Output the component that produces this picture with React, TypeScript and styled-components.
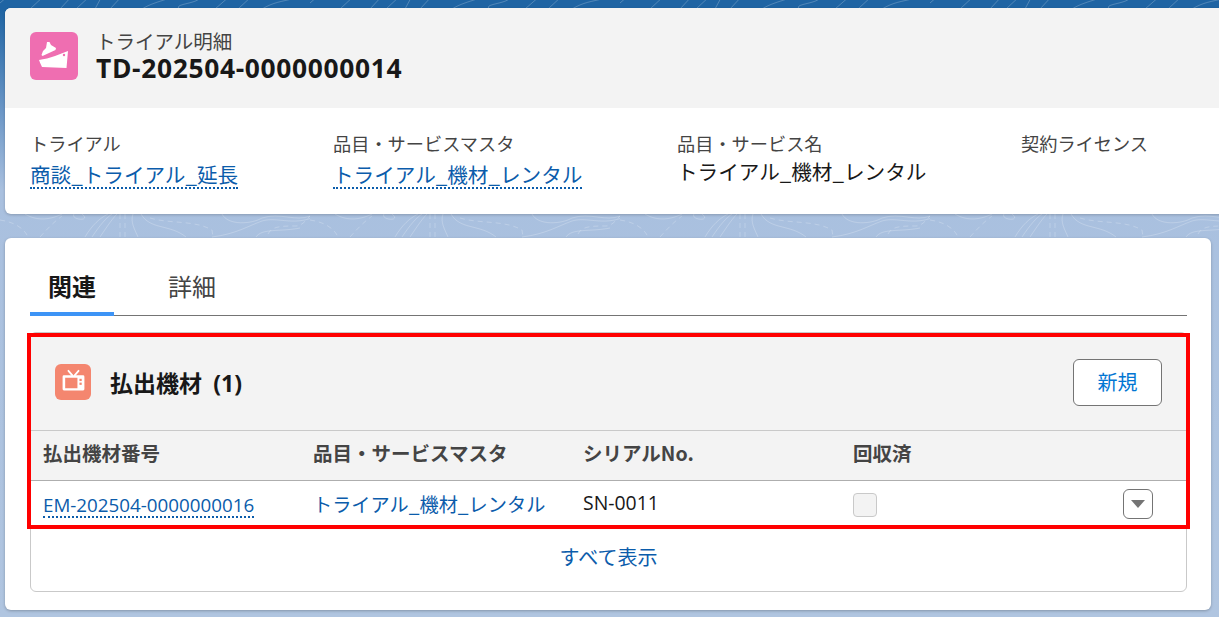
import React from "react";
import styled, { createGlobalStyle } from "styled-components";

const Global = createGlobalStyle`
  html, body { margin: 0; padding: 0; height: 100%; overflow: hidden; }
  body { font-family: "Noto Sans", "Noto Sans CJK JP", sans-serif; color: #181818; }
`;
const FONT_JP = `"Noto Sans CJK JP", "Noto Sans", sans-serif`;

const Page = styled.div`
  position: relative; width: 1219px; height: 617px; overflow: hidden; box-sizing: border-box;
  padding: 8px 0 0 5px;
  background: linear-gradient(180deg, #1f64a3 0px, #1f64a3 10px, #5b8cc0 90px, #a9c0df 190px, #b0c5e0 617px);
`;
const Contours = styled.svg`position: absolute; inset: 0; width: 100%; height: 100%;`;
const HeaderCard = styled.section`
  position: relative; width: 1240px; height: 205.5px; border-radius: 6px; overflow: hidden; background: #fff;
  box-shadow: 0 1px 3px rgba(0,0,0,.2);
`;
const Highlights = styled.div`
  height: 100px; background: #f3f3f3; display: flex; align-items: flex-start; padding: 24px 0 0 25px; gap: 18px; box-sizing: border-box;
`;
const IconTile = styled.div<{ $bg: string; $size: number }>`
  width: ${p => p.$size}px; height: ${p => p.$size}px; background: ${p => p.$bg}; border-radius: 6px; flex: none;
  display: flex; align-items: center; justify-content: center;
`;
const TitleStack = styled.div`display: flex; flex-direction: column; margin-top: -3px;`;
const Kicker = styled.div`font: 400 19.5px/24px ${FONT_JP}; color: #444;`;
const Title = styled.div`font: 700 26.4px/32px "Open Sans", sans-serif; letter-spacing: .65px; color: #181818; margin-top: -1px;`;
const Fields = styled.div`display: grid; grid-template-columns: 303px 344px 344px 1fr; padding: 22px 0 0 25px;`;
const Field = styled.div`display: flex; flex-direction: column; align-items: flex-start;`;
const FieldLabel = styled.div`font: 400 18.2px/26px ${FONT_JP}; color: #444;`;
const FieldValue = styled.div`font: 400 20.6px/30px ${FONT_JP}; color: #181818;`;
const FieldLink = styled(FieldValue)`color: #0b5cab; border-bottom: 2px dotted #0b5cab; line-height: 26px; margin-top: 5px;`;

const MainCard = styled.section`
  position: relative; width: 1206px; height: 372px; margin-top: 24.5px; background: #fff; border-radius: 6px; box-sizing: border-box;
  padding: 24px 24px 0 25px; box-shadow: 0 1px 3px rgba(0,0,0,.25);
`;
const Tabs = styled.div`display: flex; border-bottom: 1px solid #747474; height: 54px; box-sizing: border-box;`;
const Tab = styled.div<{ $active?: boolean }>`
  width: ${p => p.$active ? "84px" : "auto"}; padding: ${p => p.$active ? "0" : "0 30px 0 54px"}; height: 54px; box-sizing: border-box; text-align: center;
  font: ${p => p.$active ? 700 : 400} 24px/48px ${FONT_JP}; color: ${p => p.$active ? "#181818" : "#444"};
  border-bottom: ${p => p.$active ? "4px solid #3d94f6" : "none"};
`;
const ListBox = styled.div`
  position: relative; margin-top: 16px; height: 260px; box-sizing: border-box; border: 1px solid #c9c9c9; border-radius: 6px; display: flex; flex-direction: column;
`;
const ListHead = styled.div`
  height: 97px; flex: none; box-sizing: border-box; background: #f3f3f3; display: flex; align-items: center; padding: 0 24px 0 24px; border-radius: 6px 6px 0 0;
`;
const ListTitle = styled.h2`font: 700 23px/28px ${FONT_JP}; margin: 1px 0 0 19px; flex: 1; color: #181818;
  & span { font-family: "Open Sans", sans-serif; margin-left: 6px; }`;
const NewButton = styled.button`
  width: 89px; height: 47px; background: #fff; border: 1px solid #747474; border-radius: 6px; color: #0176d3; font: 400 20px/1 ${FONT_JP}; padding: 0; margin-top: 1px;
`;
const Row = styled.div`display: grid; grid-template-columns: 270px 270px 270px 1fr; padding-left: 12px; align-items: center; box-sizing: border-box; position: relative;`;
const HeadRow = styled(Row)`height: 51px; background: #f3f3f3; border-top: 1px solid #c9c9c9; border-bottom: 1px solid #aeaeae;`;
const BodyRow = styled(Row)`height: 48px; background: #fff;`;
const HeadCell = styled.div`font: 700 19.5px/24px ${FONT_JP}; color: #444; margin-top: -6px;`;
const CellLink = styled.a`font: 400 19.2px/26px ${FONT_JP}; color: #0b5cab; justify-self: start; margin-top: -2px;`;
const IdLink = styled.a`font: 400 18.8px/22px "Open Sans", sans-serif; color: #0b5cab; justify-self: start; border-bottom: 2px dotted #0b5cab; margin-top: 1px;`;
const CellText = styled.div`font: 400 19.4px/24px "Open Sans", sans-serif; color: #181818; margin-top: -4px;`;
const CheckBox = styled.div`width: 24px; height: 24px; box-sizing: border-box; background: #f3f3f3; border: 1px solid #c9c9c9; border-radius: 4px; margin-top: 0;`;
const RowMenu = styled.button`
  position: absolute; right: 33px; top: 8px; width: 30px; height: 30px; box-sizing: border-box; background: #fff; border: 1px solid #747474; border-radius: 6px; padding: 0;
  display: flex; align-items: center; justify-content: center;
`;
const Footer = styled.div`flex: 1; display: flex; align-items: center; justify-content: center; font: 400 20px/26px ${FONT_JP}; color: #0b5cab; margin-top: -6px;`;
const RedFrame = styled.div`
  position: absolute; left: 22px; top: 95px; width: 1163px; height: 196px; box-sizing: border-box; border: 4px solid #ff0000; pointer-events: none;
`;

const solid = [
  "M25 214C38 222 52 219 62 214",
  "M85 237C92 225 100 218 108 214",
  "M92 237C100 225 106 218 112 214",
  "M100 237C108 225 113 218 117 214",
  "M133 214C130 222 135 230 138 237",
  "M141 214C150 230 170 224 186 237",
  "M222 214C228 226 252 224 262 218C280 212 296 222 310 216",
  "M212 237C236 234 248 226 262 221C278 216 296 228 320 214",
  "M256 237C262 228 280 232 300 228",
  "M82 214C92 222 70 220 74 214",
  "M0 3L8 -4M30 9L44 -4M60 9L72 -4M76 9L90 -4M95 9L102 -4M110 9L122 -4",
  "M142 9C150 4 158 2 170 -2M180 9C172 4 196 4 200 -2M215 9L230 -4M238 9L252 -4M262 9C274 2 280 2 296 -2",
];
const dashed = [
  "M120 214V237M125 214V237",
  "M150 218C170 224 195 220 212 230L213 237",
  "M0 220C14 222 24 228 28 237",
  "M40 237C48 228 54 222 62 216",
  "M268 234C272 226 282 226 296 226C302 226 306 220 310 216",
];

const App: React.FC = () => (
  <Page>
    <Global />
    <Contours fill="none" stroke="#fff" strokeOpacity=".22" strokeWidth="1">
      <defs>
        <pattern id="contour" width="310" height="617" patternUnits="userSpaceOnUse">
          {solid.map(d => <path key={d} d={d} fill="none" stroke="#fff" strokeOpacity=".22" />)}
          {dashed.map(d => <path key={d} d={d} fill="none" stroke="#fff" strokeOpacity=".22" strokeDasharray="5 4" />)}
        </pattern>
      </defs>
      <rect width="1219" height="617" fill="url(#contour)" stroke="none" />
    </Contours>
    <HeaderCard>
      <Highlights>
        <IconTile $bg="#ef6eb1" $size={48}>
          <svg width="48" height="48" viewBox="0 0 48 48" fill="#fff">
            <path d="M17 10h2.5l1.5 3 5 3-.5 2-13 6-1-1 1.500-4 3-3z" />
            <path d="M9 28C14 27 20 26 25 24L38 19 36.500 36 12 35Q10 31 9 28z" />
            <circle cx="34" cy="23" r="1.2" fill="#ef6eb1" />
          </svg>
        </IconTile>
        <TitleStack>
          <Kicker>トライアル明細</Kicker>
          <Title>TD-202504-0000000014</Title>
        </TitleStack>
      </Highlights>
      <Fields>
        <Field><FieldLabel>トライアル</FieldLabel><FieldLink>商談_トライアル_延長</FieldLink></Field>
        <Field><FieldLabel>品目・サービスマスタ</FieldLabel><FieldLink>トライアル_機材_レンタル</FieldLink></Field>
        <Field><FieldLabel>品目・サービス名</FieldLabel><FieldValue>トライアル_機材_レンタル</FieldValue></Field>
        <Field><FieldLabel>契約ライセンス</FieldLabel></Field>
      </Fields>
    </HeaderCard>
    <MainCard>
      <Tabs>
        <Tab $active>関連</Tab>
        <Tab>詳細</Tab>
      </Tabs>
      <ListBox>
        <ListHead>
          <IconTile $bg="#f4866f" $size={36}>
            <svg width="27" height="27" viewBox="0 0 24 24" fill="none">
              <path d="M7.500 2.500 11 6.500M16.500 2.500 13 6.500" stroke="#fff" strokeWidth="1.6" strokeLinecap="round" />
              <path fillRule="evenodd" fill="#fff" d="M3.500 6.500h17a1.200 1.200 0 0 1 1.200 1.200v11a1.200 1.200 0 0 1-1.200 1.200h-17a1.200 1.200 0 0 1-1.200-1.200v-11a1.200 1.200 0 0 1 1.200-1.200zM4.600 8.700v9.400h10.900V8.700z" />
              <rect x="17.3" y="9.6" width="2" height="2" fill="#f4866f" />
              <rect x="17.3" y="13" width="2" height="2" fill="#f4866f" />
            </svg>
          </IconTile>
          <ListTitle>払出機材 <span>(1)</span></ListTitle>
          <NewButton>新規</NewButton>
        </ListHead>
        <HeadRow>
          <HeadCell>払出機材番号</HeadCell>
          <HeadCell>品目・サービスマスタ</HeadCell>
          <HeadCell>シリアルNo.</HeadCell>
          <HeadCell>回収済</HeadCell>
        </HeadRow>
        <BodyRow>
          <IdLink>EM-202504-0000000016</IdLink>
          <CellLink>トライアル_機材_レンタル</CellLink>
          <CellText>SN-0011</CellText>
          <CheckBox />
          <RowMenu>
            <svg width="16" height="10" viewBox="0 0 16 10"><path d="M1 1h14L8 9z" fill="#747474" /></svg>
          </RowMenu>
        </BodyRow>
        <Footer>すべて表示</Footer>
      </ListBox>
      <RedFrame />
    </MainCard>
  </Page>
);

export default App;
